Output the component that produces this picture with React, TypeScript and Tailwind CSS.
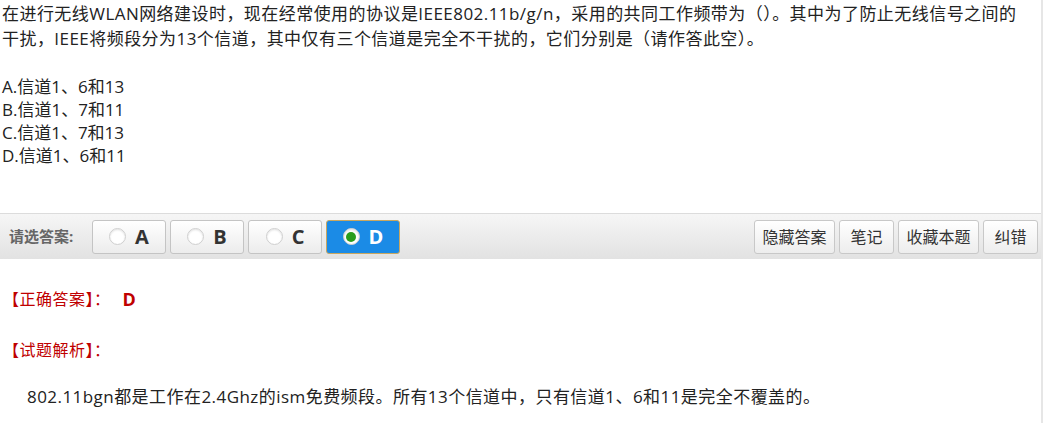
import React from 'react';

const options = ['A.信道1、6和13', 'B.信道1、7和11', 'C.信道1、7和13', 'D.信道1、6和11'];
const choices = ['A', 'B', 'C', 'D'];
const tools = [
  { t: '隐藏答案', w: 'w-[81px]' },
  { t: '笔记', w: 'w-[55px]' },
  { t: '收藏本题', w: 'w-[81px]' },
  { t: '纠错', w: 'w-[55px]' },
];
const selected = 'D';

const font = { fontFamily: '"Open Sans", "Noto Sans CJK SC", sans-serif' };

export default function App() {
  return (
    <div className="w-[1043px] h-[423px] bg-white text-[#222] border-r-2 border-[#e6e6e6] overflow-hidden" style={font}>
      <div className="pl-[2px] pr-[8px] pt-[1px] text-[17px] leading-[25px] tracking-[0.45px]">
        在进行无线WLAN网络建设时，现在经常使用的协议是IEEE802.11b/g/n，采用的共同工作频带为（）。其中为了防止无线信号之间的干扰，IEEE将频段分为13个信道，其中仅有三个信道是完全不干扰的，它们分别是（请作答此空）。
      </div>

      <div className="px-[2px] pt-[24px] text-[17px] leading-[23px]">
        {options.map((o) => (
          <div key={o}>{o}</div>
        ))}
      </div>

      <div className="mt-[46px] h-[46px] border-t border-[#dcdcdc] bg-gradient-to-b from-[#f6f6f6] to-[#e2e2e2] flex items-center pl-[9px] pr-[3px]">
        <span className="text-[15px] font-bold text-[#666] w-[83px]">请选答案:</span>
        <div className="flex gap-[4px]">
          {choices.map((c) => {
            const on = c === selected;
            return (
              <div
                key={c}
                className={
                  on
                    ? 'w-[74px] h-[34px] rounded-[3px] border border-[#c9a760] bg-[#1b8be6] flex items-center justify-center gap-[9px] text-white'
                    : 'w-[74px] h-[34px] rounded-[3px] border border-[#c4c4c4] bg-gradient-to-b from-white to-[#ececec] flex items-center justify-center gap-[9px] text-[#333]'
                }
              >
                <span className="w-[17px] h-[17px] rounded-full bg-white border border-[#cfcfcf] shadow-[inset_0_1px_2px_rgba(0,0,0,0.12)] flex items-center justify-center">
                  {on && <span className="w-[10px] h-[10px] rounded-full bg-[#2a9d1c]" />}
                </span>
                <span className="text-[20px] font-bold leading-none">{c}</span>
              </div>
            );
          })}
        </div>
        <div className="ml-auto flex gap-[4px]">
          {tools.map(({ t, w }) => (
            <div
              key={t}
              className={`${w} h-[34px] rounded-[3px] border border-[#c8c8c8] bg-gradient-to-b from-white to-[#ededed] flex items-center justify-center text-[16px] text-[#333]`}
            >
              {t}
            </div>
          ))}
        </div>
      </div>

      <div className="px-[3px] pt-[28px] text-[16px] leading-[24px] text-[#c00000] flex items-center tracking-[0.5px]">
        <span>【正确答案】：</span>
        <span className="ml-[12px] font-bold text-[18px]">D</span>
      </div>
      <div className="px-[3px] pt-[27px] text-[16px] leading-[24px] text-[#c00000] tracking-[0.5px]">【试题解析】：</div>
      <div className="pl-[27px] pt-[23px] text-[17px] leading-[24px] text-[#222] tracking-[0.45px]">
        802.11bgn都是工作在2.4Ghz的ism免费频段。所有13个信道中，只有信道1、6和11是完全不覆盖的。
      </div>
    </div>
  );
}
